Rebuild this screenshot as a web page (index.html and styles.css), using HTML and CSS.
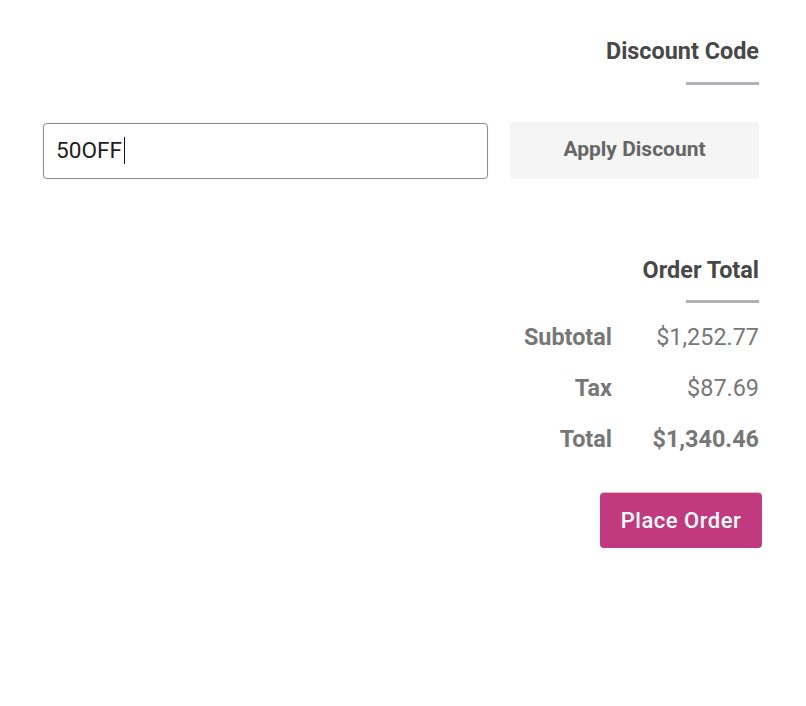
FILE: index.html
```html
<!DOCTYPE html>
<html>
<head>
<meta charset="utf-8">
<link rel="stylesheet" href="styles.css">
</head>
<body>
<main class="checkout">
  <section class="discount">
    <h2 class="section-title">Discount Code</h2>
    <div class="rule"></div>
    <div class="discount-row">
      <div class="code-input"><span class="code-text">50OFF</span><span class="caret"></span></div>
      <button class="apply-btn">Apply Discount</button>
    </div>
  </section>
  <section class="totals">
    <h2 class="section-title">Order Total</h2>
    <div class="rule"></div>
    <div class="total-row"><span class="label">Subtotal</span><span class="value">$1,252.77</span></div>
    <div class="total-row"><span class="label">Tax</span><span class="value">$87.69</span></div>
    <div class="total-row grand"><span class="label">Total</span><span class="value">$1,340.46</span></div>
    <div class="actions"><button class="order-btn">Place Order</button></div>
  </section>
</main>
</body>
</html>
```
FILE: styles.css
```css
html, body {
  margin: 0;
  padding: 0;
  background: #ffffff;
}
body {
  font-family: Roboto, "Liberation Sans", sans-serif;
}
.checkout {
  padding: 36px 47px 0 43px;
  display: flex;
  flex-direction: column;
}
.section-title {
  margin: 0;
  font-size: 23.4px;
  line-height: 30px;
  font-weight: 700;
  color: #484848;
  text-align: right;
}
.rule {
  align-self: flex-end;
  width: 73px;
  height: 3px;
  background: #b3b1b8;
  margin-left: auto;
}
.discount .rule {
  margin-top: 16px;
}
.discount-row {
  display: flex;
  align-items: flex-start;
  gap: 22px;
  margin-top: 37px;
}
.code-input {
  flex: 0 0 auto;
  width: 431px;
  height: 52px;
  margin-top: 1px;
  padding: 0 0 2px 12px;
  border: 1px solid #8c8c8c;
  border-radius: 4px;
  box-shadow: 0 0 1px rgba(0,0,0,0.25);
  display: flex;
  align-items: center;
  box-sizing: content-box;
}
.code-text {
  font-family: Roboto, "Liberation Sans", sans-serif;
  font-size: 22.6px;
  color: #1e1e1e;
}
.caret {
  display: inline-block;
  width: 1px;
  height: 27px;
  background: #111;
  margin-left: 2px;
}
.apply-btn {
  flex: 1 1 auto;
  height: 57px;
  padding: 0 0 3px 0;
  border: none;
  border-radius: 4px;
  background: #f5f5f5;
  color: #666666;
  font-family: Roboto, "Liberation Sans", sans-serif;
  font-size: 21px;
  font-weight: 700;
}
.totals {
  margin-top: 76px;
  display: flex;
  flex-direction: column;
}
.totals .rule {
  margin-top: 15px;
  margin-bottom: 8px;
}
.total-row {
  display: flex;
  justify-content: flex-end;
  align-items: center;
  height: 51px;
  font-size: 23.4px;
  color: #777777;
}
.label {
  font-weight: 700;
  text-align: right;
}
.value {
  width: 147px;
  text-align: right;
  font-weight: 400;
}
.grand .value {
  font-weight: 700;
}
.actions {
  display: flex;
  justify-content: flex-end;
  margin-top: 29px;
  margin-right: -3px;
}
.order-btn {
  width: 162px;
  height: 55px;
  border: none;
  border-radius: 4px;
  background: #c13a80;
  color: #ffffff;
  font-family: Roboto, "Liberation Sans", sans-serif;
  font-size: 22px;
  font-weight: 500;
  letter-spacing: 0.5px;
  box-shadow: 0 -1px 0 #e8b9a6;
}
```
